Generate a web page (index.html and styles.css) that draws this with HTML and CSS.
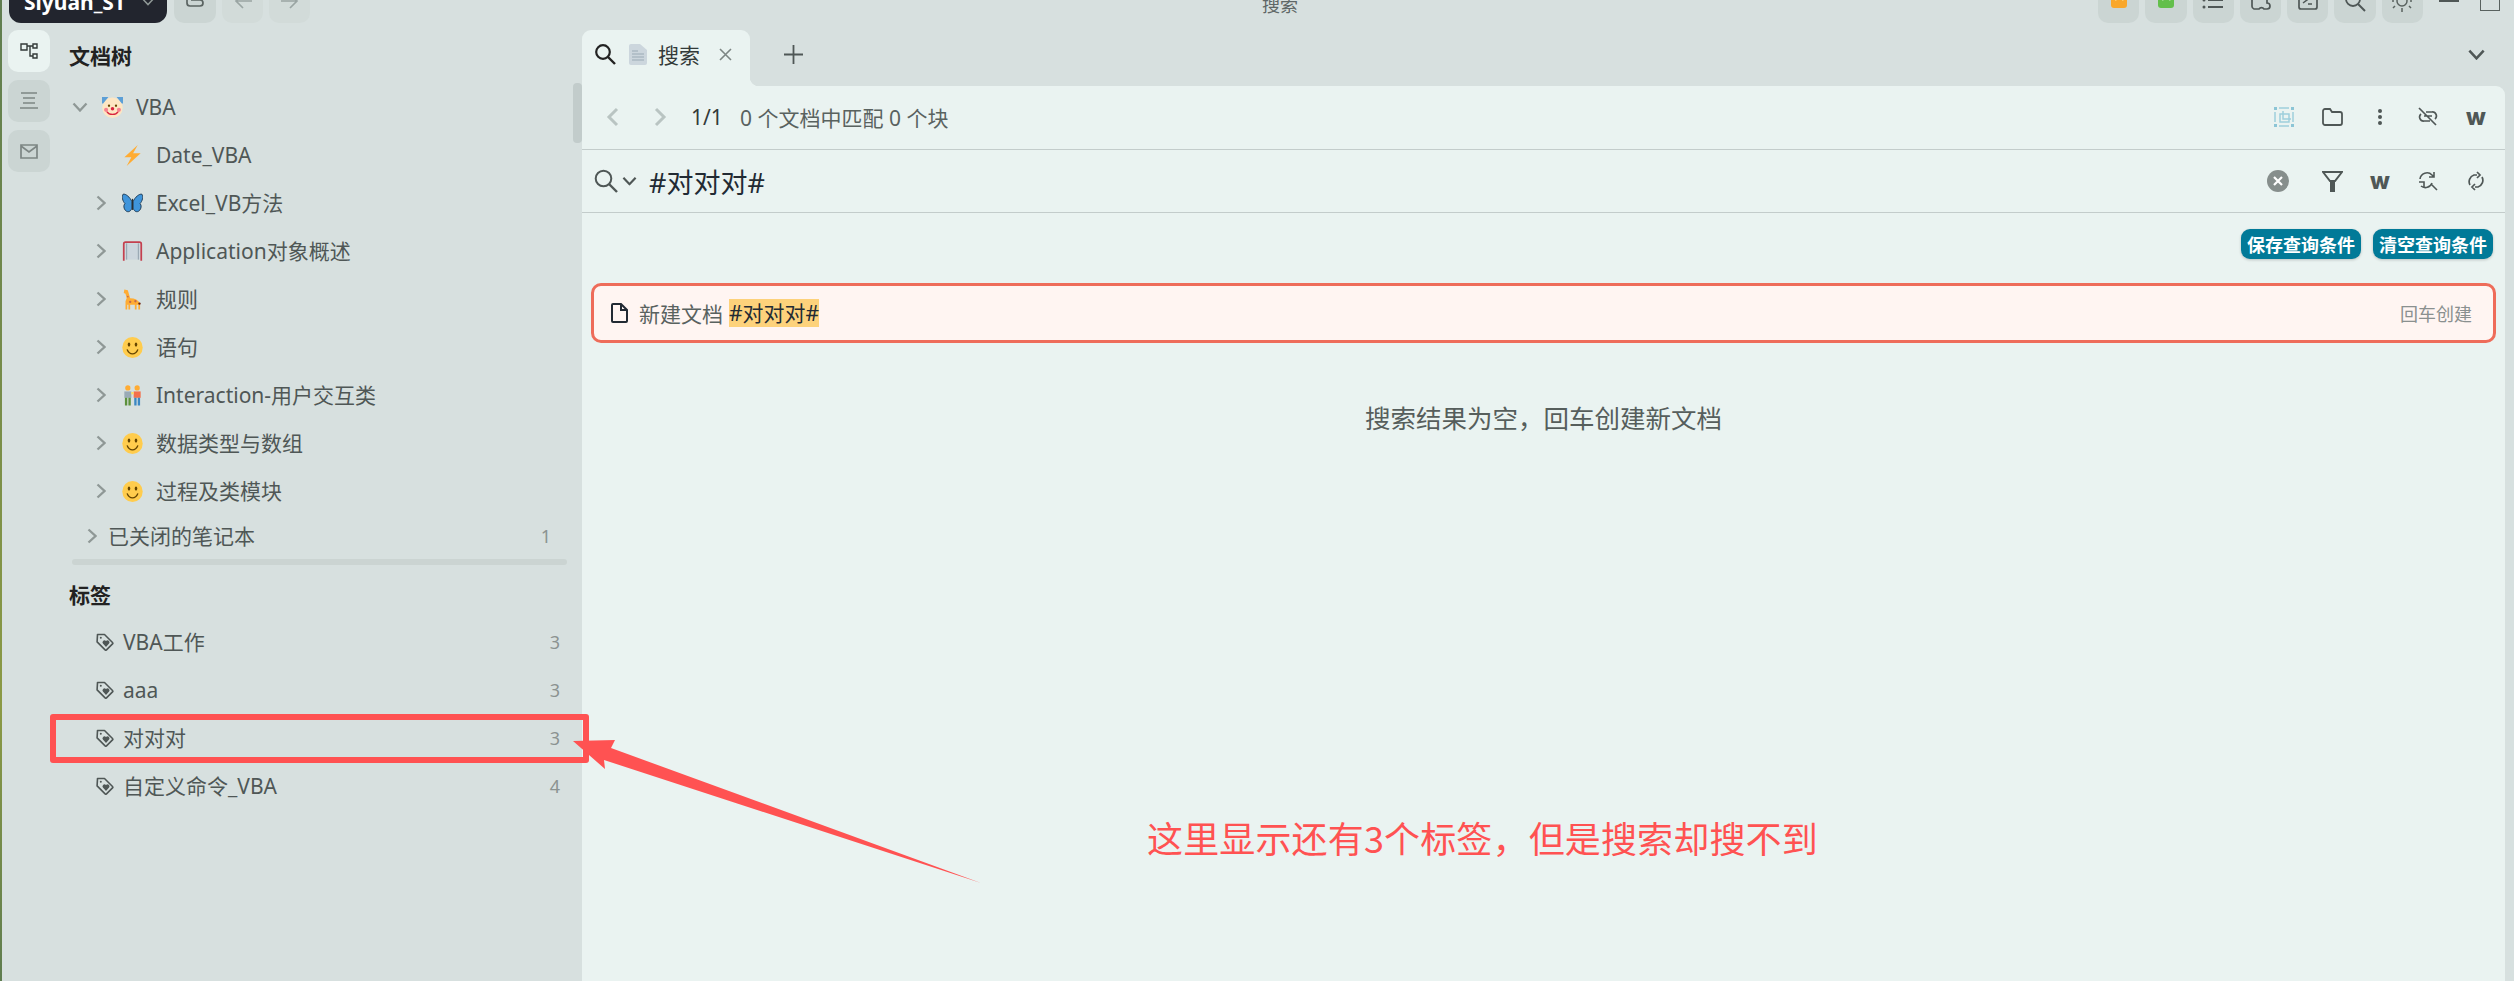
FILE: index.html
```html
<!DOCTYPE html>
<html lang="zh-CN">
<head>
    <meta charset="UTF-8">
    <title>搜索 - SiYuan</title>
    <link rel="stylesheet" href="styles.css">
</head>
<body>
    <!-- shared icons -->
    <svg class="defs" width="0" height="0">
        <symbol id="i-right" viewBox="0 0 10 16"><path d="M1.5 1.5 8.5 8l-7 6.500" fill="none" stroke="currentColor" stroke-width="2.300"/></symbol>
        <symbol id="i-down" viewBox="0 0 16 10"><path d="M1.500 1.500 8 8.500l6.500-7" fill="none" stroke="currentColor" stroke-width="2.300"/></symbol>
        <symbol id="i-tag" viewBox="0 0 18 18"><path d="M1.500 1.500h7l8 8a1 1 0 0 1 0 1.400l-6 6a1 1 0 0 1-1.400 0l-8-8z" fill="none" stroke="currentColor" stroke-width="1.600" stroke-linejoin="round"/><circle cx="4.800" cy="4.800" r="1" fill="currentColor"/><path d="M10 14 6.900 10.600a2 2 0 0 1 2.800-2.800l.3.300.3-.3a2 2 0 0 1 2.800 2.800z" fill="currentColor"/></symbol>
        <symbol id="e-smile" viewBox="0 0 36 36"><ellipse cx="18" cy="18" rx="17.500" ry="18" fill="#ffcc4d"/><ellipse cx="12" cy="13" rx="2.200" ry="3.500" fill="#664500"/><ellipse cx="24" cy="13" rx="2.200" ry="3.500" fill="#664500"/><path d="M9 22c2 5 6 7 9 7s7-2 9-7" fill="none" stroke="#664500" stroke-width="2.200" stroke-linecap="round"/></symbol>
        <symbol id="e-clown" viewBox="0 0 36 36"><circle cx="18" cy="18.500" r="17.500" fill="#fde6c3"/><path d="M0 0h11L2 11H0zM36 0H25l9 11h2z" fill="#5c9fd6"/><circle cx="12" cy="15" r="2" fill="#664500"/><circle cx="24" cy="15" r="2" fill="#664500"/><circle cx="7" cy="22" r="3.500" fill="#f7808f"/><circle cx="29" cy="22" r="3.500" fill="#f7808f"/><circle cx="18" cy="20" r="3" fill="#d9243e"/><path d="M9 26c3 5 15 5 18 0" fill="none" stroke="#d9243e" stroke-width="2.500" stroke-linecap="round"/></symbol>
        <symbol id="e-bolt" viewBox="0 0 30 36"><path d="M24 0 1 21h12L5 36l24-22H16z" fill="#ffac33"/></symbol>
        <symbol id="e-fly" viewBox="0 0 36 36"><path d="M17 15C14 7 6 1 2 2-1 6 1 14 5 18c-3 3-2 9 1 12 4 4 9 2 11-4zM19 15c3-8 11-14 15-13 3 4 1 12-3 16 3 3 2 9-1 12-4 4-9 2-11-4z" fill="#3f95db" stroke="#1f3a52" stroke-width="1.600"/><path d="M18 10v19" stroke="#292f33" stroke-width="2"/></symbol>
        <symbol id="e-book" viewBox="0 0 36 36"><path d="M4 4h28v28H4z" fill="#ccd6dd"/><path d="M3 34V5c0-2 1-3 3-3h24c2 0 3 1 3 3v29" fill="none" stroke="#c4404f" stroke-width="3"/><path d="M8 4v28M28 4v28" stroke="#8899a6" stroke-width="1.500"/></symbol>
        <symbol id="e-giraffe" viewBox="0 0 30 36"><path d="M1 1l6 1 4 14c8 0 14 3 17 9v10h-3v-8h-3v8h-3v-8h-8v8H8v-8H6v8H3V21l2-5-2-8-3-1z" fill="#ffac33"/><circle cx="11" cy="22" r="2" fill="#c1694f"/><circle cx="20" cy="21" r="2" fill="#c1694f"/><circle cx="7" cy="13" r="1.500" fill="#c1694f"/><circle cx="27" cy="25" r="2" fill="#662113"/></symbol>
        <symbol id="e-people" viewBox="0 0 36 36"><circle cx="10" cy="5" r="4.500" fill="#ffac33"/><circle cx="26" cy="5" r="4.500" fill="#ffac33"/><path d="M4 11h12v11H4z" fill="#99aab5"/><path d="M20 11h12v11H20z" fill="#f4704c"/><path d="M5 22h4v13H5zM11 22h4v13h-4z" fill="#5c913b"/><path d="M21 22h4v13h-4zM27 22h4v13h-4z" fill="#3b88c3"/><path d="M16 12h4v4h-4z" fill="#ffdc5d"/></symbol>
    </svg>

    <div class="strip"></div>
    <div class="app">
        <header class="topbar">
            <div class="top-group">
                <div class="workspace">Siyuan_ST
                    <svg width="12" height="8" viewBox="0 0 16 10"><path d="M1.500 1.500 8 8.500l6.500-7" fill="none" stroke="#8f9896" stroke-width="2"/></svg>
                </div>
                <div class="top-btn">
                    <svg width="22" height="22" viewBox="0 0 22 22"><path d="M3 4v8c0 2 1 3 3 3h10c2 0 3-1 3-3s-1-3-3-3H7" fill="none" stroke="#5b6462" stroke-width="1.700"/></svg>
                </div>
                <div class="top-btn top-btn-nav">
                    <svg width="22" height="22" viewBox="0 0 22 22"><path d="M20 10H4M11 3l-7 7 7 7" fill="none" stroke="#9aa5a3" stroke-width="1.700"/></svg>
                </div>
                <div class="top-btn top-btn-nav">
                    <svg width="22" height="22" viewBox="0 0 22 22"><path d="M2 10h16M11 3l7 7-7 7" fill="none" stroke="#9aa5a3" stroke-width="1.700"/></svg>
                </div>
            </div>
            <div class="top-title">搜索</div>
            <div class="top-group">
                <div class="top-btn top-btn-r"><svg width="18" height="22" viewBox="0 0 18 22"><path d="M1 0h16v14c0 2-1 3-3 3H4c-2 0-3-1-3-3z" fill="#f9a72b"/><path d="M5 9l1.500 0M12 9h1.500" stroke="#fdd27b" stroke-width="1.500"/></svg></div>
                <div class="top-btn top-btn-r"><svg width="18" height="22" viewBox="0 0 18 22"><path d="M1 0h16v14c0 2-1 3-3 3H4c-2 0-3-1-3-3z" fill="#63bf4b"/><path d="M5 9l1.500 0M12 9h1.500" stroke="#a8dd9a" stroke-width="1.500"/></svg></div>
                <div class="top-btn top-btn-r"><svg width="22" height="22" viewBox="0 0 22 22"><path d="M6 9h15M6 16h15" stroke="#4f5756" stroke-width="2"/><circle cx="2" cy="9" r="1.500" fill="#4f5756"/><circle cx="2" cy="16" r="1.500" fill="#4f5756"/></svg></div>
                <div class="top-btn top-btn-r"><svg width="22" height="22" viewBox="0 0 22 22"><path d="M3 8h4a3 3 0 0 1 6 0h5v4a3 3 0 0 1 0 6h-3a3 3 0 0 0-5 0H5a3 3 0 0 1-2-3z" fill="none" stroke="#4f5756" stroke-width="1.700"/></svg></div>
                <div class="top-btn top-btn-r"><svg width="22" height="22" viewBox="0 0 22 22"><rect x="2" y="1" width="18" height="17" rx="2" fill="none" stroke="#4f5756" stroke-width="1.700"/><path d="M6 6l4 3-4 3M11 13h4" fill="none" stroke="#4f5756" stroke-width="1.500"/></svg></div>
                <div class="top-btn top-btn-r"><svg width="22" height="22" viewBox="0 0 22 22"><circle cx="9" cy="8" r="7" fill="none" stroke="#4f5756" stroke-width="1.800"/><path d="M14 13l7 7" stroke="#4f5756" stroke-width="2"/></svg></div>
                <div class="top-btn top-btn-r"><svg width="22" height="22" viewBox="0 0 22 22"><circle cx="11" cy="10" r="5" fill="none" stroke="#59625f" stroke-width="1.500"/><path d="M11 17v4M4 15l-2 2M18 15l2 2M1 10h2M19 10h2" stroke="#59625f" stroke-width="1.500"/></svg></div>
                <div class="win-min"></div>
                <div class="win-max"></div>
            </div>
        </header>

        <div class="main">
            <nav class="dock">
                <div class="dock-btn dock-btn-on">
                    <svg width="18" height="16" viewBox="0 0 18 16"><path d="M1 1h6v6H1zM13 1h4v4h-4zM13 11h4v4h-4zM7 3h6M10 3v10h3" fill="none" stroke="#333a39" stroke-width="1.400"/></svg>
                </div>
                <div class="dock-btn">
                    <svg width="18" height="18" viewBox="0 0 18 18"><path d="M1 1h16M3 6h12M3 11h12M0 16h18" stroke="#7d8684" stroke-width="1.600"/></svg>
                </div>
                <div class="dock-btn">
                    <svg width="18" height="15" viewBox="0 0 18 15"><path d="M1 1h16v13H1zM1 2l8 6 8-6" fill="none" stroke="#7d8684" stroke-width="1.700"/></svg>
                </div>
            </nav>

            <aside class="sidebar">
                <div class="scroll-thumb"></div>
                <h2 class="side-title">文档树</h2>
                <div class="row row-book">
                    <svg class="chev-down"><use href="#i-down"/></svg>
                    <svg class="emoji"><use href="#e-clown"/></svg>
                    <span>VBA</span>
                </div>
                <div class="row row-doc">
                    <span class="chev-space"></span>
                    <svg class="emoji"><use href="#e-bolt"/></svg>
                    <span>Date_VBA</span>
                </div>
                <div class="row row-doc">
                    <svg class="chev"><use href="#i-right"/></svg>
                    <svg class="emoji"><use href="#e-fly"/></svg>
                    <span>Excel_VB方法</span>
                </div>
                <div class="row row-doc">
                    <svg class="chev"><use href="#i-right"/></svg>
                    <svg class="emoji"><use href="#e-book"/></svg>
                    <span>Application对象概述</span>
                </div>
                <div class="row row-doc">
                    <svg class="chev"><use href="#i-right"/></svg>
                    <svg class="emoji"><use href="#e-giraffe"/></svg>
                    <span>规则</span>
                </div>
                <div class="row row-doc">
                    <svg class="chev"><use href="#i-right"/></svg>
                    <svg class="emoji"><use href="#e-smile"/></svg>
                    <span>语句</span>
                </div>
                <div class="row row-doc">
                    <svg class="chev"><use href="#i-right"/></svg>
                    <svg class="emoji"><use href="#e-people"/></svg>
                    <span>Interaction-用户交互类</span>
                </div>
                <div class="row row-doc">
                    <svg class="chev"><use href="#i-right"/></svg>
                    <svg class="emoji"><use href="#e-smile"/></svg>
                    <span>数据类型与数组</span>
                </div>
                <div class="row row-doc">
                    <svg class="chev"><use href="#i-right"/></svg>
                    <svg class="emoji"><use href="#e-smile"/></svg>
                    <span>过程及类模块</span>
                </div>
                <div class="row row-closed">
                    <svg class="chev"><use href="#i-right"/></svg>
                    <span>已关闭的笔记本</span>
                    <span class="count">1</span>
                </div>
                <div class="side-bar"></div>
                <h2 class="side-title side-title-tags">标签</h2>
                <div class="row row-tag">
                    <svg class="tag"><use href="#i-tag"/></svg>
                    <span>VBA工作</span>
                    <span class="count">3</span>
                </div>
                <div class="row row-tag">
                    <svg class="tag"><use href="#i-tag"/></svg>
                    <span>aaa</span>
                    <span class="count">3</span>
                </div>
                <div class="row row-tag">
                    <svg class="tag"><use href="#i-tag"/></svg>
                    <span>对对对</span>
                    <span class="count">3</span>
                </div>
                <div class="row row-tag">
                    <svg class="tag"><use href="#i-tag"/></svg>
                    <span>自定义命令_VBA</span>
                    <span class="count">4</span>
                </div>
            </aside>

            <section class="content">
                <div class="tabbar">
                    <div class="tab">
                        <svg width="22" height="22" viewBox="0 0 22 22"><circle cx="9" cy="9" r="6.800" fill="none" stroke="#222" stroke-width="2.200"/><path d="M14 14l7 7" stroke="#222" stroke-width="2.400"/></svg>
                        <svg class="tab-doc" width="18" height="21" viewBox="0 0 18 21"><path d="M2 0h9l7 6v13a2 2 0 0 1-2 2H2a2 2 0 0 1-2-2V2a2 2 0 0 1 2-2z" fill="#ccd6dd"/><path d="M3 7h6M3 10h12M3 13h12M3 16h12" stroke="#99aab5" stroke-width="1.200"/></svg>
                        <span class="tab-name">搜索</span>
                        <svg class="tab-x" width="13" height="13" viewBox="0 0 13 13"><path d="M1 1l11 11M12 1 1 12" stroke="#7d8684" stroke-width="1.600"/></svg>
                    </div>
                    <svg class="tab-add" width="19" height="19" viewBox="0 0 19 19"><path d="M9.500 0v19M0 9.500h19" stroke="#4f5756" stroke-width="1.800"/></svg>
                    <svg class="tab-more" width="19" height="11" viewBox="0 0 16 10"><use href="#i-down"/></svg>
                </div>

                <div class="panel">
                    <div class="toolbar">
                        <svg class="nav-chev" width="13" height="20" viewBox="0 0 13 20"><path d="M11 2 3 10l8 8" fill="none" stroke="#b9c4c2" stroke-width="3"/></svg>
                        <svg class="nav-chev nav-next" width="13" height="20" viewBox="0 0 13 20"><path d="M2 2l8 8-8 8" fill="none" stroke="#b9c4c2" stroke-width="3"/></svg>
                        <span class="pager">1/1</span>
                        <span class="match">0 个文档中匹配 0 个块</span>
                        <div class="tools">
                            <span class="tool"><svg width="20" height="20" viewBox="0 0 20 20"><path d="M1 5v10M19 5v10M5 1h10M5 19h10M6 7h9v8H6zM9 4v8h8" fill="none" stroke="#9fcfdc" stroke-width="1.500"/><path d="M0 0h3v3H0zM17 0h3v3h-3zM0 17h3v3H0zM17 17h3v3h-3z" fill="#8cc5d6"/></svg></span>
                            <span class="tool"><svg width="21" height="18" viewBox="0 0 21 18"><path d="M1 3a2 2 0 0 1 2-2h5l2 3h8a2 2 0 0 1 2 2v9a2 2 0 0 1-2 2H3a2 2 0 0 1-2-2z" fill="none" stroke="#4f5756" stroke-width="1.800"/></svg></span>
                            <span class="tool"><svg width="6" height="16" viewBox="0 0 6 16"><circle cx="3" cy="2" r="2" fill="#4f5756"/><circle cx="3" cy="8" r="2" fill="#4f5756"/><circle cx="3" cy="14" r="2" fill="#4f5756"/></svg></span>
                            <span class="tool"><svg width="20" height="19" viewBox="0 0 20 19"><path d="M8 5h6a4 4 0 0 1 3 7M12 14H6a4 4 0 0 1-3-7M6 9h8M1 1l17 17" fill="none" stroke="#4f5756" stroke-width="1.700"/></svg></span>
                            <span class="tool tool-w">w</span>
                        </div>
                    </div>
                    <div class="toolbar toolbar-search">
                        <svg width="24" height="24" viewBox="0 0 24 24"><circle cx="9.500" cy="9.500" r="7.800" fill="none" stroke="#4f5756" stroke-width="2"/><path d="M15 15l8 8" stroke="#4f5756" stroke-width="2.400"/></svg>
                        <svg class="search-chev" width="15" height="10" viewBox="0 0 16 10"><use href="#i-down"/></svg>
                        <span class="query">#对对对#</span>
                        <div class="tools">
                            <span class="tool tool-clear"><svg width="22" height="22" viewBox="0 0 22 22"><circle cx="11" cy="11" r="11" fill="#868e8c"/><path d="M7 7l8 8M15 7l-8 8" stroke="#fff" stroke-width="2.200"/></svg></span>
                            <span class="tool"><svg width="21" height="21" viewBox="0 0 21 21"><path d="M1 1h19l-7 9H8z" fill="none" stroke="#4f5756" stroke-width="2"/><path d="M8 10h5v11H8z" fill="#4f5756"/></svg></span>
                            <span class="tool tool-w">w</span>
                            <span class="tool"><svg width="20" height="20" viewBox="0 0 20 20"><path d="M2 8a7 7 0 0 1 12-4l2 2M16 1v5h-5M1 11h5v5M14 12a7 7 0 0 1-11 3M13 13l6 6" fill="none" stroke="#4f5756" stroke-width="1.600"/></svg></span>
                            <span class="tool"><svg width="16" height="20" viewBox="0 0 16 20"><path d="M2 14a7 7 0 0 1 4-10h3M14 6a7 7 0 0 1-4 10H7M9 1l3 3-3 3M7 13l-3 3 3 3" fill="none" stroke="#4f5756" stroke-width="1.700"/></svg></span>
                        </div>
                    </div>
                    <div class="query-actions">
                        <button class="teal-btn">保存查询条件</button>
                        <button class="teal-btn">清空查询条件</button>
                    </div>
                    <div class="create-row">
                        <svg width="17" height="20" viewBox="0 0 17 20"><path d="M2 1h8l6 6v11a1 1 0 0 1-1 1H2a1 1 0 0 1-1-1V2a1 1 0 0 1 1-1zM10 1v6h6" fill="none" stroke="#222a33" stroke-width="2"/></svg>
                        <span class="create-label">新建文档</span>
                        <mark class="create-query">#对对对#</mark>
                        <span class="create-hint">回车创建</span>
                    </div>
                    <p class="empty">搜索结果为空，回车创建新文档</p>
                </div>
            </section>
        </div>
    </div>

    <!-- red marks painted over the screenshot -->
    <div class="mark-box"></div>
    <svg class="mark-arrow" width="430" height="160" viewBox="0 0 430 160"><path d="M13 11 55 10 51 18 421 153 44 30 45 39z" fill="#ff5252"/></svg>
    <div class="mark-text">这里显示还有3个标签，但是搜索却搜不到</div>
</body>
</html>
```

FILE: styles.css
```css
* {
    box-sizing: border-box;
}
html, body {
    height: 100%;
}
body {
    margin: 0;
    display: flex;
    overflow: hidden;
    background-color: #d7e0df;
    color: #4f5756;
    font-family: "Noto Sans", "Noto Sans CJK SC", sans-serif;
    font-size: 21px;
}
.defs {
    position: absolute;
}
.strip {
    width: 2px;
    flex: none;
    background: linear-gradient(#5f7d50, #8b9a45 72%, #5f7d50);
}
.app {
    flex: 1;
    min-width: 0;
    display: flex;
    flex-direction: column;
}

/* top bar, cut off by the top of the picture */
.topbar {
    height: 23px;
    flex: none;
    display: flex;
    align-items: flex-end;
    padding: 0 14px 0 7px;
    overflow: hidden;
}
.top-group {
    display: flex;
    align-items: flex-end;
    gap: 6px;
}
.top-title {
    flex: 1;
    align-self: flex-end;
    padding: 0 0 5px 152px;
    text-align: center;
    font-size: 18px;
    line-height: 25px;
    height: 30px;
    margin-top: -7px;
    color: #5f6766;
}
.workspace {
    width: 158px;
    height: 42px;
    margin-right: 1px;
    padding-left: 15px;
    display: flex;
    align-items: center;
    gap: 16px;
    border-radius: 0 0 12px 12px;
    background-color: #22252e;
    color: #fff;
    font-size: 21px;
    font-weight: 700;
    white-space: nowrap;
}
.top-btn {
    width: 42px;
    height: 42px;
    display: flex;
    align-items: center;
    justify-content: center;
    border-radius: 10px;
    background-color: #cbd5d3;
}
.top-btn-nav {
    width: 41px;
    background-color: #d2dbd9;
}
.top-btn-r {
    width: 41.3px;
}
.win-min {
    width: 20px;
    height: 2px;
    margin: 0 0 21px 10px;
    background-color: #4f5756;
}
.win-max {
    width: 20px;
    height: 14px;
    margin: 0 0 12px 15px;
    border: 1.5px solid #59625f;
}

.main {
    flex: 1;
    min-height: 0;
    display: flex;
}

/* left dock */
.dock {
    width: 48px;
    flex: none;
    padding: 7px 0 0 6px;
    display: flex;
    flex-direction: column;
    gap: 8px;
}
.dock-btn {
    width: 42px;
    height: 42px;
    display: flex;
    align-items: center;
    justify-content: center;
    border-radius: 10px;
    background-color: #cbd5d3;
}
.dock-btn-on {
    background-color: #eaf3f1;
}

/* doc tree + tags */
.sidebar {
    width: 532px;
    flex: none;
    position: relative;
    padding-top: 9px;
}
.scroll-thumb {
    position: absolute;
    top: 60px;
    right: 0;
    width: 9px;
    height: 60px;
    border-radius: 4px;
    background-color: #c2cccb;
}
.side-title {
    margin: 0 0 3px;
    padding-left: 19px;
    height: 48px;
    line-height: 48px;
    font-size: 21px;
    font-weight: 700;
    color: #222;
}
.side-title-tags {
    margin: 0;
    height: 53px;
    padding-top: 8px;
    line-height: 45px;
}
.row {
    height: 48px;
    display: flex;
    align-items: center;
    line-height: 28px;
    white-space: nowrap;
}
.row-book {
    padding-left: 22px;
}
.row-doc {
    padding-left: 46px;
}
.row-closed {
    height: 42px;
    padding: 0 31px 0 37px;
}
.row-tag {
    padding: 0 22px 0 46px;
}
.chev, .chev-space {
    width: 10px;
    height: 16px;
    margin-right: 16px;
    flex: none;
    color: #8f9896;
}
.chev-down {
    width: 16px;
    height: 10px;
    margin-right: 14px;
    flex: none;
    color: #8f9896;
}
.row-closed .chev {
    margin-right: 11px;
}
.emoji {
    width: 21px;
    height: 21px;
    margin-right: 13px;
    flex: none;
}
.tag {
    width: 18px;
    height: 18px;
    margin-right: 9px;
    flex: none;
}
.count {
    margin-left: auto;
    font-size: 18px;
    color: #8b9391;
}
.side-bar {
    height: 6px;
    margin: 2px 15px 0 22px;
    border-radius: 3px;
    background-color: #cbd4d2;
}

/* right side */
.content {
    width: 1923px;
    flex: none;
    display: flex;
    flex-direction: column;
}
.tabbar {
    height: 63px;
    flex: none;
    padding-top: 7px;
    display: flex;
    align-items: flex-start;
}
.tab {
    position: relative;
    width: 168px;
    height: 56px;
    padding: 0 0 8px 12px;
    display: flex;
    align-items: center;
    border-radius: 9px 9px 0 0;
    background-color: #eaf3f1;
    color: #333a39;
}
.tab::after {
    content: "";
    position: absolute;
    right: -9px;
    bottom: 0;
    width: 9px;
    height: 9px;
    background: radial-gradient(circle at top right, transparent 9px, #eaf3f1 9.500px);
}
.tab-doc {
    margin-left: 13px;
}
.tab-name {
    margin-left: 11px;
}
.tab-x {
    margin-left: 19px;
}
.tab-add {
    margin: 15px 0 0 34px;
}
.tab-more {
    margin: 19px 19px 0 auto;
    color: #4f5756;
}
.panel {
    flex: 1;
    min-height: 0;
    border-radius: 0 9px 0 0;
    background-color: #eaf3f1;
}
.toolbar {
    height: 64px;
    padding: 0 5px 2px 24px;
    display: flex;
    align-items: center;
    border-bottom: 1.500px solid #c3cccb;
}
.toolbar-search {
    height: 63px;
    padding: 0 5px 0 12px;
}
.nav-next {
    margin-left: 35px;
}
.pager {
    width: 49px;
    margin-left: 24px;
    color: #333a39;
}
.match {
    color: #59625f;
}
.tools {
    margin-left: auto;
    display: flex;
    align-items: center;
}
.tool {
    width: 48px;
    display: flex;
    justify-content: center;
    align-items: center;
}
.tool-clear {
    padding-right: 12px;
}
.tool-w {
    font-family: Inter, sans-serif;
    font-size: 23px;
    font-weight: 800;
    line-height: 24px;
    color: #4f5756;
}
.search-chev {
    margin-left: 4px;
    color: #4f5756;
}
.query {
    margin-left: 12px;
    font-size: 27px;
    color: #222a33;
}
.query-actions {
    padding: 16px 12px 0 0;
    display: flex;
    justify-content: flex-end;
    gap: 12px;
}
.teal-btn {
    width: 120px;
    height: 30px;
    padding: 0;
    border: none;
    border-radius: 9px;
    background-color: #017a98;
    box-shadow: 0 1px 3px rgba(0,0,0,0.2);
    color: #fff;
    font-family: "Noto Sans CJK SC", sans-serif;
    font-size: 18px;
    font-weight: 700;
}
.create-row {
    height: 60px;
    margin: 24px 9px 0;
    padding: 0 21px 0 17px;
    display: flex;
    align-items: center;
    border: 3px solid #ee6c5a;
    border-radius: 10px;
    background-color: #fff5f2;
}
.create-label {
    margin-left: 11px;
    color: #59625f;
}
.create-query {
    height: 28px;
    margin-left: 6px;
    line-height: 28px;
    background-color: #fdd27b;
    color: #222a33;
}
.create-hint {
    margin-left: auto;
    font-size: 18px;
    color: #8a908f;
}
.empty {
    margin: 50px 0 0;
    line-height: 50px;
    text-align: center;
    font-size: 25.5px;
    color: #565e5c;
}

/* annotations */
.mark-box {
    position: absolute;
    left: 50px;
    top: 714px;
    width: 539px;
    height: 49px;
    border: 6px solid #ff5252;
    border-radius: 3px;
}
.mark-arrow {
    position: absolute;
    left: 560px;
    top: 730px;
}
.mark-text {
    position: absolute;
    left: 1147px;
    top: 811px;
    font-family: "Noto Sans CJK SC", sans-serif;
    font-size: 36px;
    line-height: 52px;
    letter-spacing: 0.15px;
    color: #ff5252;
    white-space: nowrap;
}
```
